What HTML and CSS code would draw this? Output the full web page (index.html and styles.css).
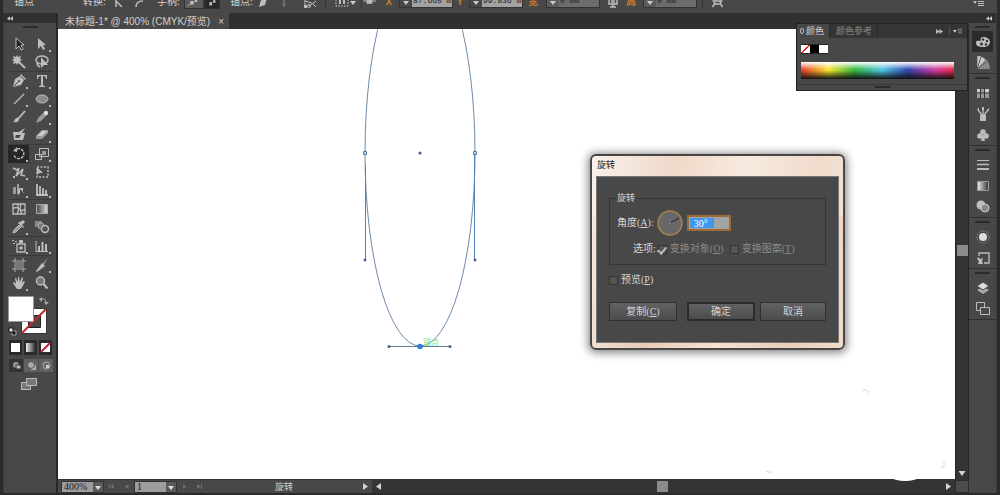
FILE: index.html
```html
<!DOCTYPE html>
<html lang="zh-CN">
<head>
<meta charset="utf-8">
<title>未标题-1</title>
<link rel="stylesheet" href="styles.css">
</head>
<body>
<div class="app">
  <header class="options">
    <div class="options-row">
      <span>锚点</span>
      <span>转换:</span>
      <svg class="icon" viewBox="0 0 16 16"><path d="M6 14V7M6 8l6 6" stroke="currentColor" fill="none" stroke-width="1.5"/></svg>
      <svg class="icon" viewBox="0 0 16 16"><path d="M6 14c0-4 2-6 7-6" stroke="currentColor" fill="none" stroke-width="1.5"/></svg>
      <span>手柄:</span>
      <button class="opt-button" aria-label="显示手柄"><svg class="icon" viewBox="0 0 16 16"><path d="M3 14l4-4" stroke="currentColor"/><path d="M6 8h4v4H6zM11 6h3v3h-3z" fill="currentColor"/></svg></button>
      <button class="opt-button pressed" aria-label="隐藏手柄"><svg class="icon" viewBox="0 0 16 16"><path d="M5 9h3v4H5zM9 7h3v3H9z" fill="currentColor"/></svg></button>
      <span>锚点:</span>
      <svg class="icon" viewBox="0 0 16 16"><path d="M4 14l2-7 6-2-2 7z" fill="currentColor"/></svg>
      <svg class="icon dim" viewBox="0 0 16 16"><path d="M8 6v8M6 11h4" stroke="currentColor" stroke-width="2"/></svg>
      <svg class="icon" viewBox="0 0 16 16"><path d="M3 6v8M3 8l7 2 4 4M14 8l-7 5" stroke="currentColor" fill="none"/><path d="M2 12h3v3H2z" fill="currentColor"/><circle cx="7" cy="13" r="1.5" fill="none" stroke="currentColor"/></svg>
      <div class="cluster"><svg class="icon" viewBox="0 0 16 16"><path d="M2 6v7h12V6" stroke="currentColor" fill="none" stroke-dasharray="2 1"/><path d="M5 7h2v4H5zM9 7h2v4H9z" fill="currentColor"/></svg><i class="caret"></i></div>
      <svg class="icon line-left" viewBox="0 0 16 16"><path d="M1 8h14" stroke="currentColor"/><path d="M5 7h6v4H5z" fill="currentColor"/></svg>
      <b class="axis">X</b>
      <div class="field"><button aria-label="调整 X"><i class="caret"></i></button><input aria-label="X" value="87.665 m"></div>
      <b class="axis">Y</b>
      <div class="field"><button aria-label="调整 Y"><i class="caret"></i></button><input aria-label="Y" value="99.836 m"></div>
      <b class="axis">宽</b>
      <div class="field off"><button disabled aria-label="调整宽"><i class="caret"></i></button><input aria-label="宽" value="0 mm" disabled></div>
      <svg class="icon" viewBox="0 0 16 16"><path d="M4 7v4h3V7M9 7v4h3V7M5 14h6M8 11v3" stroke="currentColor" fill="none" stroke-width="1.5"/></svg>
      <b class="axis">高</b>
      <div class="field off"><button disabled aria-label="调整高"><i class="caret"></i></button><input aria-label="高" value="0 mm" disabled></div>
      <svg class="icon line-left wide" viewBox="0 0 16 16"><path d="M3 8h10M5 8v3h6V8M5 11l-2 3M11 11l2 3" stroke="currentColor" fill="none" stroke-width="1.5"/></svg>
      <svg class="icon" viewBox="0 0 16 16"><path d="M2 8h4l-2 3z" fill="currentColor"/><path d="M7 8.500h6M7 10.500h6M7 12.500h6" stroke="currentColor"/></svg>
    </div>
  </header>

  <div class="workspace">
    <aside class="tools">
      <div class="strip"><svg class="chevrons" viewBox="0 0 8 6"><path d="M4 0v6L0 3zM8 0v6L4 3z" fill="currentColor"/></svg></div>
      <div class="tools-body">
        <i class="grip"></i>
        <div class="tool-grid">
          <button aria-label="选择"><svg class="icon" viewBox="0 0 16 16"><path d="M5 2v11l3-3 2 4 2-1-2-4h3z" fill="#222" stroke="currentColor"/></svg></button>
          <button class="more" aria-label="直接选择"><svg class="icon" viewBox="0 0 16 16"><path d="M4 2v11l3-3 2 4 2-1-2-4h3z" fill="currentColor"/></svg></button>
          <button aria-label="魔棒"><svg class="icon" viewBox="0 0 16 16"><path d="M7 7l7 7" stroke="currentColor" stroke-width="1.8"/><path d="M6 1l1 2 3-1-1 3 2 1-2 1 1 3-3-1-1 2-1-2-3 1 1-3-2-1 2-1-1-3 3 1z" fill="currentColor"/></svg></button>
          <button aria-label="套索"><svg class="icon" viewBox="0 0 16 16"><ellipse cx="8" cy="6" rx="6" ry="4" fill="none" stroke="currentColor" stroke-width="1.5"/><path d="M3 9q0 3 3 4" fill="none" stroke="currentColor" stroke-width="1.5"/><path d="M7 3v11l3-3h4z" fill="currentColor"/></svg></button>
          <hr>
          <button class="more" aria-label="钢笔"><svg class="icon" viewBox="0 0 16 16"><path d="M2 14l2-8 5-3 4 4-3 5z" fill="currentColor"/><path d="M9 2l1-1 5 5-1 1z" fill="currentColor"/><path d="M3 13l5-5" stroke="#484848"/><circle cx="8" cy="8" r="1" fill="#484848"/></svg></button>
          <button class="more" aria-label="文字"><svg class="icon" viewBox="0 0 16 16"><path d="M3 2h10v4h-1q0-3-3-3v9q0 1 2 1v1H5v-1q2 0 2-1V3Q4 3 4 6H3z" fill="currentColor"/></svg></button>
          <button class="more" aria-label="直线段"><svg class="icon" viewBox="0 0 16 16"><path d="M3 13L13 3" stroke="currentColor" stroke-width="1.3"/></svg></button>
          <button class="more" aria-label="椭圆"><svg class="icon" viewBox="0 0 16 16"><ellipse cx="8" cy="8" rx="6" ry="4" fill="#8c8c8c" stroke="#bbb"/></svg></button>
          <button aria-label="画笔"><svg class="icon" viewBox="0 0 16 16"><path d="M14 2L7 10" stroke="currentColor" stroke-width="1.8"/><path d="M8 9q1 5-6 4 2-1 2-3 2-2 4-1z" fill="currentColor"/></svg></button>
          <button class="more" aria-label="铅笔"><svg class="icon" viewBox="0 0 16 16"><path d="M2 14l2-5 6-6 3 3-6 6z" fill="#999"/><circle cx="12" cy="4" r="2.2" fill="#ddd"/></svg></button>
          <button aria-label="斑点画笔"><svg class="icon" viewBox="0 0 16 16"><path d="M2 5h6l6-4-3 5h3l-2 7H3z" fill="currentColor"/><path d="M5 8h5l-2 3H4z" fill="#484848"/></svg></button>
          <button class="more" aria-label="橡皮擦"><svg class="icon" viewBox="0 0 16 16"><path d="M2 9l6-6h6v3l-6 6H2z" fill="#999"/><path d="M3 9l5-5h5L8 9z" fill="#ccc"/></svg></button>
          <hr>
          <button class="more active" aria-label="旋转"><svg class="icon" viewBox="0 0 16 16"><path d="M6 3a5 5 0 1 1-3 6" fill="none" stroke="currentColor" stroke-width="1.4" stroke-dasharray="3 1"/><path d="M6 1v5L2 5z" fill="currentColor"/></svg></button>
          <button class="more" aria-label="比例缩放"><svg class="icon" viewBox="0 0 16 16"><path d="M5.500 2.500h9v8h-9zM1.500 8.500h6v5h-6z" fill="none" stroke="currentColor"/><path d="M8 5h4v4H8z" fill="#999"/></svg></button>
          <button class="more" aria-label="宽度"><svg class="icon" viewBox="0 0 16 16"><path d="M2 4l4 2 2-2-3 8 7-7-2 6 4 1" fill="none" stroke="currentColor" stroke-width="1.6"/><path d="M2 12h2v2H2z" fill="currentColor"/></svg></button>
          <button aria-label="自由变换"><svg class="icon" viewBox="0 0 16 16"><path d="M3 3h11v10H3z" fill="none" stroke="currentColor" stroke-width="1.500" stroke-dasharray="2 1.500"/><path d="M3 3v8l2-2h4z" fill="currentColor"/></svg></button>
          <button class="more" aria-label="形状生成器"><svg class="icon" viewBox="0 0 16 16"><path d="M2 5h3v7H2zM6 2h2v10H6z" fill="#999"/><path d="M7 5v8l2-2h4zM9 6h3v5H9z" fill="currentColor"/></svg></button>
          <button class="more" aria-label="透视网格"><svg class="icon" viewBox="0 0 16 16"><path d="M3 2v12M6 4v10M9 6v8M12 8v6M2 13h12" stroke="currentColor" stroke-width="1.8"/></svg></button>
          <hr>
          <button aria-label="网格"><svg class="icon" viewBox="0 0 16 16"><path d="M2 3h12v10H2zM2 8q3-3 6 0t6 0M6 3q3 5 0 10M10 3q-2 5 1 10" fill="none" stroke="currentColor" stroke-width="1.3"/></svg></button>
          <button aria-label="渐变"><svg class="icon" viewBox="0 0 16 16"><defs><linearGradient id="fade"><stop stop-color="#444"/><stop offset="1" stop-color="#ddd"/></linearGradient><linearGradient id="fade2"><stop stop-color="#eee"/><stop offset="1" stop-color="#333"/></linearGradient></defs><path d="M2.500 3.500h11v9h-11z" fill="url(#fade)" stroke="#aaa"/></svg></button>
          <button class="more" aria-label="吸管"><svg class="icon" viewBox="0 0 16 16"><path d="M2 14l1-3 5-5 2 2-5 5z" fill="#999" stroke="currentColor"/><path d="M7 4l5 5 1-1-2-2 3-3-2-2-3 2-1 0z" fill="currentColor"/></svg></button>
          <button aria-label="混合"><svg class="icon" viewBox="0 0 16 16"><path d="M1 2h7v6H1z" fill="#888"/><circle cx="7" cy="7" r="3" fill="#777" stroke="#aaa"/><circle cx="11" cy="10" r="3.500" fill="#555" stroke="currentColor" stroke-width="1.400"/></svg></button>
          <hr>
          <button class="more" aria-label="符号喷枪"><svg class="icon" viewBox="0 0 16 16"><path d="M6 6h8v8H6z" fill="none" stroke="currentColor" stroke-width="1.3"/><path d="M8 2h4v3H8zM1 2h2v1H1zM4 3h2v1H4zM2 5h2v1H2z" fill="currentColor"/><circle cx="10" cy="10" r="1.8" fill="currentColor"/></svg></button>
          <button class="more" aria-label="柱形图"><svg class="icon" viewBox="0 0 16 16"><path d="M2 3v10.500h12" fill="none" stroke="currentColor"/><path d="M5 8v5M8.500 4v9M12 6v7" stroke="currentColor" stroke-width="2"/></svg></button>
          <hr>
          <button aria-label="画板"><svg class="icon" viewBox="0 0 16 16"><path d="M4 1v14M12 1v14M1 4h14M1 12h14" stroke="#aaa"/><path d="M5 5h6v6H5z" fill="#777"/></svg></button>
          <button class="more" aria-label="切片"><svg class="icon" viewBox="0 0 16 16"><path d="M14 1L9 9l-2-1z" fill="#999"/><path d="M8 6l3 3-8 6-1-1z" fill="currentColor"/></svg></button>
          <button class="more" aria-label="抓手"><svg class="icon" viewBox="0 0 16 16"><path d="M6 14L2 8l1-1 2 2-1-6h1l2 4V2h1l1 5 2-5 1 1-1 5 2-2 1 1-4 7z" fill="currentColor"/></svg></button>
          <button aria-label="缩放"><svg class="icon" viewBox="0 0 16 16"><circle cx="6.500" cy="6" r="4" fill="#777" stroke="currentColor" stroke-width="1.4"/><path d="M9.500 9l4 4.500" stroke="currentColor" stroke-width="2.200"/></svg></button>
        </div>
        <svg class="paint" viewBox="0 0 44 40">
          <path d="M13.500 12.500h25v25h-25z" fill="#fff" stroke="#333"/><path d="M20.500 19.500h12v12h-12z" fill="#484848" stroke="#222"/>
          <path d="M14 37L38 13" stroke="#c2242c" stroke-width="2"/>
          <path d="M.5.5h25v25H.5z" fill="#fff" stroke="#999"/>
          <path d="M33 3h3q2 0 2 4" fill="none" stroke="#aaa"/><path d="M34 1v5l-3-3zM36 6h5l-3 3z" fill="#aaa"/>
          <path d="M4 35h4v4H4z" fill="#111" stroke="#aaa"/><path d="M1 32h4v4H1z" fill="#eee" stroke="#111"/>
        </svg>
        <div class="modes">
          <button aria-label="颜色"><svg class="mode-icon" viewBox="0 0 13 13"><path d="M2 2h9v9H2z" fill="#fff"/></svg></button>
          <button aria-label="渐变"><svg class="mode-icon" viewBox="0 0 13 13"><path d="M2 2h9v9H2z" fill="url(#fade2)"/></svg></button>
          <button aria-label="无"><svg class="mode-icon" viewBox="0 0 13 13"><path d="M2 2h9v9H2z" fill="#fff"/><path d="M2 11l9-9" stroke="#c2242c" stroke-width="2"/></svg></button>
        </div>
        <div class="modes flat">
          <button class="active" aria-label="正常绘图"><svg class="mode-icon" viewBox="0 0 13 13"><circle cx="6" cy="6" r="3" fill="#999"/><path d="M6 6h5v4H6z" fill="#bbb" stroke="#333"/></svg></button>
          <button aria-label="背面绘图"><svg class="mode-icon" viewBox="0 0 13 13"><path d="M6 6h5v5H6z" fill="#aaa"/><circle cx="6" cy="6" r="3.500" fill="#aaa" stroke="#555"/></svg></button>
          <button aria-label="内部绘图"><svg class="mode-icon" viewBox="0 0 13 13"><circle cx="6.500" cy="6.500" r="3.500" fill="#666" stroke="#aaa"/><path d="M6 6h3v3H6z" fill="#ccc"/></svg></button>
        </div>
        <button class="screen" aria-label="屏幕模式"><svg class="icon" viewBox="0 0 16 16"><path d="M.5 6.500h9v7h-9z" fill="#777" stroke="currentColor"/><path d="M5.500 2.500h10v7h-10z" fill="#777" stroke="currentColor"/></svg></button>
      </div>
    </aside>

    <main class="document">
      <nav class="tabs"><div class="tab"><span>未标题-1* @ 400% (CMYK/预览)</span><button aria-label="关闭">×</button></div></nav>
      <div class="stage">
        <svg class="artboard">
          <g fill="none">
            <ellipse cx="362" cy="124" rx="55" ry="193" stroke="#6e88a8"/>
            <path d="M307.500 136v95M416.500 124v107" stroke="#5583b8"/>
            <path d="M331 317.500h61" stroke="#6a7890"/>
          </g>
          <g fill="#46658e">
            <circle cx="307" cy="231" r="1.500"/><circle cx="417" cy="231" r="1.500"/>
            <circle cx="331" cy="317.500" r="1.500"/><circle cx="392" cy="317.500" r="1.500"/>
            <circle cx="362" cy="124" r="1.600"/>
          </g>
          <g fill="#c3d2e4" stroke="#56799f"><path d="M305.500 122.500h3v3h-3zM415.500 122.500h3v3h-3z"/></g>
          <text class="hint" x="365" y="316">锚点</text>
          <circle cx="362" cy="317.500" r="2.800" fill="#2f7fd8"/>
          <g fill="none" stroke="#d8d8d8"><path d="M804 362q4-3 7 2M708 442q3 2 6 1M886 432v6h-3"/></g>
        </svg>
        <div class="vscroll"><i class="thumb"></i><i class="arrow down"></i></div>
      </div>
      <footer class="status">
        <div class="status-left">
          <div class="combo"><select aria-label="缩放"><option>400%</option></select></div>
          <button class="nav" aria-label="首页"><i class="bar"></i><i class="arrow left"></i></button>
          <button class="nav" aria-label="上一页"><i class="arrow left"></i></button>
          <div class="combo"><select aria-label="画板"><option>1</option></select></div>
          <button class="nav" aria-label="下一页"><i class="arrow right"></i></button>
          <button class="nav" aria-label="末页"><i class="arrow right"></i><i class="bar"></i></button>
          <span class="current">旋转</span>
          <i class="arrow right"></i>
        </div>
        <div class="hscroll"><i class="arrow left"></i><i class="thumb"></i><i class="arrow right"></i></div>
        <i class="corner"></i>
      </footer>
    </main>

    <aside class="dock">
      <div class="strip end"><svg class="chevrons" viewBox="0 0 8 6"><path d="M4 0v6L0 3zM8 0v6L4 3z" fill="currentColor"/></svg></div>
      <div class="dock-group"><i class="grip"></i>
        <button class="active" aria-label="颜色"><svg class="icon" viewBox="0 0 16 16"><path d="M8 3c4 0 7 2 7 5s-3 5-7 5-7-1-7-4 2-2 4-2-1-4 3-4z" fill="currentColor"/><g fill="#333"><circle cx="8" cy="5.500" r="1.200"/><circle cx="12" cy="7" r="1.200"/><circle cx="11" cy="10.500" r="1.200"/><circle cx="6.500" cy="10" r="1.500"/></g></svg></button>
        <button aria-label="颜色参考"><svg class="icon" viewBox="0 0 16 16"><path d="M2 1v13h13Q14 2 2 1z" fill="#8a8a8a"/><path d="M2 14L3 1q4 0 7 4z" fill="#ccc"/><path d="M2 14l9-7M2 14L6 2" stroke="#555"/></svg></button>
      </div>
      <div class="dock-group"><i class="grip"></i>
        <button aria-label="色板"><svg class="icon" viewBox="0 0 16 16"><path d="M2 4h12v9H2z" fill="#999"/><path d="M2 4h3v3H2zM10 4h4v4h-4z" fill="#ccc"/><path d="M5.500 4v9M9.500 4v9M2 8h12" stroke="#333"/></svg></button>
        <button aria-label="画笔"><svg class="icon" viewBox="0 0 16 16"><path d="M5 9h6v6H5z" fill="currentColor"/><path d="M7 9L3 4M8 9V2M9 9l4-5" stroke="currentColor" stroke-width="1.300"/><path d="M2 3l2-1v3zM7 1h2v3H7zM12 4l2-2v3z" fill="currentColor"/></svg></button>
        <button aria-label="符号"><svg class="icon" viewBox="0 0 16 16"><g fill="currentColor"><circle cx="8" cy="5" r="2.800"/><circle cx="5" cy="9" r="2.800"/><circle cx="11" cy="9" r="2.800"/><path d="M7.500 8h1l1.500 6H6z"/></g></svg></button>
      </div>
      <div class="dock-group"><i class="grip"></i>
        <button aria-label="描边"><svg class="icon" viewBox="0 0 16 16"><path d="M2 3.500h12" stroke="currentColor"/><path d="M2 7.500h12" stroke="currentColor" stroke-width="1.500"/><path d="M2 12h12" stroke="currentColor" stroke-width="2"/></svg></button>
        <button aria-label="渐变"><svg class="icon" viewBox="0 0 16 16"><path d="M2.500 3.500h11v9h-11z" fill="url(#fade2)" stroke="#999"/></svg></button>
        <button aria-label="透明度"><svg class="icon" viewBox="0 0 16 16"><circle cx="6" cy="6" r="4.500" fill="currentColor"/><circle cx="10" cy="9" r="4" fill="#888" stroke="#ccc"/></svg></button>
      </div>
      <div class="dock-group"><i class="grip"></i>
        <button aria-label="外观"><svg class="icon" viewBox="0 0 16 16"><circle cx="8" cy="8" r="4" fill="#ddd"/><circle cx="8" cy="8" r="6" fill="none" stroke="#aaa" stroke-dasharray="1 1.500"/></svg></button>
        <button aria-label="图形样式"><svg class="icon" viewBox="0 0 16 16"><path d="M4 6V3h10v10H9" fill="none" stroke="currentColor" stroke-width="1.300"/><path d="M3 7l2 2 3-1-1 3 1 3H3l1-3-2-2z" fill="currentColor"/></svg></button>
      </div>
      <div class="dock-group"><i class="grip"></i>
        <button aria-label="图层"><svg class="icon" viewBox="0 0 16 16"><path d="M8 7l6 3-6 4-6-4z" fill="#aaa"/><path d="M8 2l6 4-6 4-6-4z" fill="#ddd" stroke="#484848"/></svg></button>
        <button aria-label="画板"><svg class="icon" viewBox="0 0 16 16"><path d="M1.500 1.500h8v8h-8z" fill="none" stroke="currentColor"/><path d="M5.500 6.500h9v7h-9z" fill="#484848" stroke="currentColor"/></svg></button>
      </div>
    </aside>
  </div>

  <section class="color-panel">
    <div class="panel-tabs">
      <button class="selected"><i class="updown"></i>颜色</button><button>颜色参考</button>
      <svg class="chevrons" viewBox="0 0 8 6"><path d="M0 0v6l4-3zM4 0v6l4-3z" fill="currentColor"/></svg>
      <svg class="panel-menu" viewBox="0 0 12 8"><path d="M1 3h4L3 6z" fill="currentColor"/><path d="M6 2h5M6 4h5M6 6h5" stroke="#888"/></svg>
    </div>
    <div class="panel-body">
      <div class="swatches"><i class="none"></i><i class="black"></i><i class="white"></i></div>
      <div class="spectrum"></div>
    </div>
    <i class="grip"></i>
  </section>

  <form class="dialog" role="dialog" aria-labelledby="dialog-title">
    <h1 id="dialog-title">旋转</h1>
    <div class="dialog-body">
      <fieldset>
        <legend>旋转</legend>
        <div class="angle">
          <label for="angle">角度(<u>A</u>):</label>
          <svg class="dial" viewBox="0 0 26 26"><circle cx="13" cy="13" r="12" fill="#686868" stroke="#a8824c" stroke-width="1.500"/><path d="M13 13l9-5" stroke="#222"/><circle cx="13" cy="13" r="1" fill="#888"/></svg>
          <div class="angle-box"><input id="angle" value="30°"></div>
        </div>
        <div class="choices">
          <span>选项:</span>
          <label><input type="checkbox" checked disabled>变换对象(<u>O</u>)</label>
          <label><input type="checkbox" disabled>变换图案(<u>T</u>)</label>
        </div>
      </fieldset>
      <label class="preview"><input type="checkbox">预览(<u>P</u>)</label>
      <div class="actions">
        <button type="button">复制(<u>C</u>)</button>
        <button type="button" class="primary">确定</button>
        <button type="button">取消</button>
      </div>
    </div>
  </form>
</div>
</body>
</html>
```
FILE: styles.css
```css
* { box-sizing: border-box; }
body { margin: 0; background: #2b2b2b; color: #d4d4d4; font: 10px/14px "Noto Sans CJK SC", sans-serif; }
button, input, select { font: inherit; color: inherit; margin: 0; padding: 0; border: 0; border-radius: 0; background: none; }
svg { display: block; }
.icon { width: 16px; height: 16px; color: #bdbdbd; }

.app { position: relative; display: flex; flex-direction: column; height: 100vh; overflow: hidden; border-bottom: 2px solid #2b2b2b; }

/* options bar: only its lower half is inside the window */
.options { display: flex; align-items: flex-end; flex: none; height: 13px; overflow: hidden; background: #484848; border-left: 3px solid #2b2b2b; border-right: 3px solid #2b2b2b; }
.options-row { display: grid; flex: 1; align-items: center; height: 25px; padding: 0 6px 0 11px;
  grid-template-columns: 69px 27px 20px 27px 27px 20px 26px 25px 21px 26px 23px 36px 21px 17px 54px 16px 57px 20px 59px 19px 19px 59px 1fr 20px; }
.options .dim { color: #6a6a6a; }
.line-left { border-left: 1px solid #333; }
.wide { width: 24px; padding-left: 6px; }
.cluster { display: flex; align-items: flex-end; padding-left: 8px; border-left: 1px solid #333; }
.cluster .caret { margin-bottom: 4px; }
.caret { border: 3px solid transparent; border-top: 4px solid #ccc; border-bottom: 0; }
.opt-button { width: 20px; height: 16px; background: #5a5a5a; border: 1px solid #333; }
.opt-button.pressed { width: 16px; background: #292929; }
.opt-button .icon { width: 14px; height: 14px; }
.axis { width: 14px; color: #c87a2c; text-align: center; }
.field { display: flex; width: 54px; height: 14px; background: #a2a2a2; border: 1px solid #333; color: #222; }
.field button { display: flex; align-items: flex-end; justify-content: center; width: 12px; padding-bottom: 2px; background: #484848; }
.field input { flex: 1; min-width: 0; width: 20px; padding-left: 1px; font: 8px/12px "Liberation Mono", monospace; }
.off { background: #6c6c6c; }
.off button { background: #5c5c5c; }

.workspace { display: flex; flex: 1; min-height: 0; padding-left: 3px; padding-right: 3px; }
.strip { display: flex; align-items: center; flex: none; height: 10px; padding: 0 4px; background: #303030; }
.end { justify-content: flex-end; }
.chevrons { width: 6px; height: 5px; color: #c8c8c8; }
.grip { display: block; width: 15px; height: 2px; background: #2a2a2a; }

.tools { display: flex; flex-direction: column; flex: none; width: 55px; border-right: 2px solid #292929; }
.tools-body { display: flex; flex: 1; flex-direction: column; align-items: flex-start; padding: 3px 4px 0 5px; background: #484848; border-left: 1px solid #3a3a3a; }
.tools-body > .grip { align-self: center; }
.tool-grid { display: grid; grid-template-columns: 21px 21px; column-gap: 2px; margin-top: 7px; margin-left: -1px; }
.tool-grid hr { grid-column: 1 / -1; width: 100%; height: 1px; margin: 0; border: 0; background: #3a3a3a; }
.tool-grid button { position: relative; display: grid; place-items: center; height: 18px; }
.tool-grid .active { background: #272727; }
.more::after { content: ""; position: absolute; right: 1px; bottom: 1px; width: 2px; height: 2px; background: #bbb; }
.paint { width: 44px; height: 40px; margin-top: 4px; margin-left: -1px; }
.modes { display: flex; gap: 2px; margin-top: 4px; }
.modes button { display: grid; place-items: center; height: 15px; background: #2a2a2a; }
.modes .mode-icon { width: 13px; height: 13px; }
.flat { gap: 1px; }
.flat button { width: 14px; height: 13px; background: #616161; }
.flat .active { background: #333; }
.screen { margin-top: 4px; margin-left: 12px; }

.document { display: flex; flex: 1; flex-direction: column; min-width: 0; }
.tabs { display: flex; flex: none; height: 16px; background: #303030; }
.tab { display: flex; align-items: center; gap: 8px; padding: 2px 5px 0 7px; background: #484848; color: #cfcfcf; font-family: "Liberation Sans", "Noto Sans CJK SC", sans-serif; }
.tab button { line-height: 12px; }
.stage { display: flex; flex: 1; min-height: 0; }
.artboard { flex: 1; min-width: 0; height: 100%; background: #fff; }
.hint { font-size: 8px; fill: #6fe58f; }
.vscroll { display: flex; flex: none; flex-direction: column; align-items: center; width: 14px; padding-bottom: 3px; background: #343434; border-left: 1px solid #262626; border-right: 1px solid #262626; }
.vscroll .thumb { width: 11px; height: 11px; margin-top: 216px; margin-bottom: auto; background: #8b8b8b; }

.arrow { width: 5px; height: 7px; background: currentColor; }
.left { clip-path: polygon(100% 0, 100% 100%, 0 50%); }
.right { clip-path: polygon(0 0, 0 100%, 100% 50%); }
.down { width: 7px; height: 5px; clip-path: polygon(0 0, 100% 0, 50% 100%); }

.status { display: flex; flex: none; height: 14px; background: #484848; border-top: 1px solid #333; }
.status-left { display: flex; align-items: center; flex: none; width: 314px; padding: 0 4px 0 3px; }
.combo { position: relative; width: 43px; height: 12px; border: 1px solid #333; }
.combo select { appearance: none; display: block; width: 100%; height: 10px; padding-left: 2px; background: linear-gradient(90deg, #9d9d9d 31px, #5a5a5a 31px); color: #1c1c1c; font: 10px/10px "Liberation Serif", serif; }
.combo::after { content: ""; position: absolute; right: 2px; top: 4px; border: 3px solid transparent; border-top: 4px solid #ddd; border-bottom: 0; pointer-events: none; }
.nav { display: flex; align-items: center; justify-content: center; width: 15px; color: #6e6e6e; }
.nav .arrow { width: 4px; height: 5px; }
.bar { width: 1px; height: 5px; background: currentColor; }
.current { margin-left: 68px; margin-right: auto; font-size: 9px; }
.hscroll { position: relative; display: flex; flex: 1; align-items: center; padding: 0 4px; background: #343434; }
.hscroll .thumb { width: 11px; height: 11px; margin-left: 276px; margin-right: auto; background: #8b8b8b; }
.hscroll::before { content: ""; position: absolute; right: 38px; top: -5px; width: 24px; height: 6px; border-radius: 50%; background: #fff; }
.corner { width: 14px; background: #4c4c4c; border: 1px solid #2c2c2c; }

.dock { flex: none; width: 28px; background: #484848; border-right: 1px solid #3a3a3a; }
.dock-group { display: flex; flex-direction: column; align-items: center; border-bottom: 1px solid #303030; }
.dock-group .grip { margin: 3px 0; }
.dock button { display: grid; place-items: center; width: 21px; height: 21px; }
.dock .active { background: #2b2b2b; }

.color-panel { position: absolute; top: 23px; right: 32px; width: 172px; padding-bottom: 2px; background: #484848; border: 1px solid #222; }
.color-panel > .grip { margin: 1px auto 0; }
.panel-tabs { display: flex; align-items: center; height: 14px; padding-right: 4px; background: #353535; font-size: 9px; }
.panel-tabs button { display: flex; align-items: center; gap: 2px; height: 14px; padding: 0 5px 0 6px; color: #8a8a8a; border-right: 1px solid #2b2b2b; }
.panel-tabs .selected { padding-left: 3px; background: #484848; color: #d4d4d4; }
.panel-tabs .chevrons { margin-left: auto; margin-right: 6px; width: 7px; }
.panel-menu { width: 14px; height: 8px; padding-left: 2px; border-left: 1px solid #555; }
.updown { width: 4px; height: 6px; border: 1px solid #bbb; border-radius: 2px; }
.panel-body { padding: 6px 13px 5px 4px; border-bottom: 1px solid #3a3a3a; }
.swatches { display: flex; height: 10px; margin-bottom: 8px; }
.swatches i { width: 9px; border: 1px solid #222; border-width: 1px 0; }
.none { background: linear-gradient(135deg, #fff 42%, #d22 42% 58%, #fff 58%); }
.black { background: #000; }
.white { background: #fff; }
.spectrum { height: 17px; background: linear-gradient(#fff 0, #fff0 45%, #0000 50%, #111 100%), linear-gradient(90deg, #e6372c, #f5e32b 18%, #32b53c 35%, #4cc3e0 53%, #3344ae 70%, #d23aa0 88%, #e0283c); }

.dialog { position: absolute; left: 590px; top: 154px; width: 255px; padding: 0 4px 5px; border: 2px solid #4b4643; border-radius: 6px; background: linear-gradient(#fff4 0 60px, #0000 60px), linear-gradient(100deg, #f6ece5, #e8cbb5 30%, #f6e3d4 55%, #e9ceb9 80%, #f0ddcc); box-shadow: 0 1px 8px 2px #0007; }
.dialog h1 { margin: 0; padding: 1px 1px 0; height: 20px; color: #222; font: 9px/16px "Noto Sans CJK SC", sans-serif; }
.dialog-body { padding: 14px 12px 21px; background: #484848; border: 1px solid #777; font-family: "Liberation Serif", "Noto Sans CJK SC", serif; }
fieldset { display: grid; gap: 6px; margin: 0; padding: 5px 7px 8px; border: 1px solid #353535; }
legend { padding: 0 2px; margin-left: -2px; font-size: 9px; }
.angle { display: flex; align-items: center; gap: 3px; }
.dial { width: 26px; height: 26px; }
.angle-box { width: 44px; height: 16px; margin-left: 1px; padding: 1px; border: 2px solid #9b6a38; background: #a3a3a3; }
.angle-box input { display: block; width: 24px; height: 10px; padding-left: 4px; background: #3e97ec; color: #fff; line-height: 10px; }
.choices { display: flex; align-items: center; padding-left: 16px; gap: 2px; }
.choices label { display: flex; align-items: center; color: #8b8b8b; margin-right: 4px; }
input[type="checkbox"] { appearance: none; display: flex; align-items: flex-start; justify-content: center; flex: none; width: 9px; height: 9px; margin-right: 3px; border: 1px solid #333; background: #555; }
input[type="checkbox"]:checked::after { content: ""; flex: none; width: 4px; height: 7px; margin-top: -1px; border: solid #bbb; border-width: 0 2px 2px 0; transform: rotate(40deg); }
.preview { display: flex; align-items: center; width: max-content; margin-top: 8px; }
.actions { display: grid; grid-template-columns: 73px 68px 66px; gap: 5px; margin-top: 15px; }
.actions button { height: 19px; border: 1px solid #303030; background: linear-gradient(#626262, #4c4c4c); line-height: 16px; }
.actions button:first-child { width: 68px; }
.actions .primary { border: 2px solid #2b2b2b; line-height: 14px; }
```
